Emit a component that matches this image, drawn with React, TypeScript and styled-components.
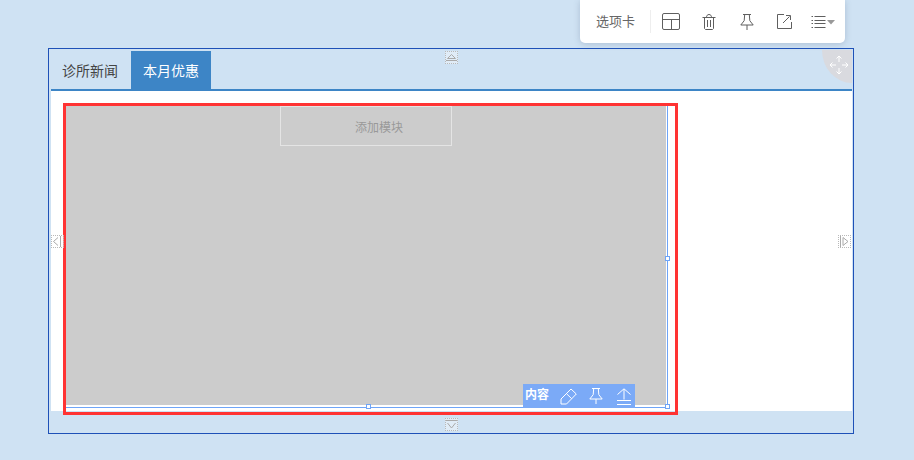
import React from 'react'
import styled, { createGlobalStyle } from 'styled-components'

const Global = createGlobalStyle`
	html, body {
		margin: 0;
		padding: 0;
		height: 460px;
		overflow: hidden;
		background: #cfe2f3;
		font-family: "Noto Sans CJK SC", "Noto Sans", sans-serif;
	}
`
const Page = styled.div`
	position: relative;
	width: 914px;
	height: 460px;
	padding: 48px 0 0 48px;
	box-sizing: border-box;
`
const TopBar = styled.div`
	position: absolute;
	top: 0;
	left: 580px;
	width: 265px;
	height: 43px;
	box-sizing: border-box;
	display: flex;
	align-items: center;
	padding: 0 10px 0 16px;
	background: #fff;
	border-radius: 0 0 5px 5px;
	box-shadow: 0 1px 6px rgba(90, 110, 140, 0.3);
	color: #5f5f5f;
`
const TopLabel = styled.span`
	font-size: 13px;
	line-height: 41px;
	height: 43px;
	width: 39px;
	white-space: nowrap;
	color: #666;
`
const TopDivider = styled.i`
	width: 1px;
	height: 23px;
	margin: 0 11px 0 15px;
	background: #eeeeee;
`
const TopIcon = styled.span<{ $w: number; $gap: number }>`
	display: flex;
	width: ${p => p.$w}px;
	margin-right: ${p => p.$gap}px;
`
const Frame = styled.div`
	position: relative;
	width: 806px;
	height: 386px;
	box-sizing: border-box;
	border: 1px solid #1f51b7;
	padding: 2px 1px 0 2px;
`
const TabBar = styled.div`
	display: flex;
	height: 40px;
	box-sizing: border-box;
	border-bottom: 2px solid #3d85c6;
`
const Tab = styled.div<{ $active?: boolean }>`
	width: 80px;
	height: 38px;
	box-sizing: border-box;
	padding-right: ${p => (p.$active ? 0 : 2)}px;
	line-height: 39px;
	text-align: center;
	font-size: 14px;
	color: ${p => (p.$active ? '#fff' : '#444')};
	background: ${p => (p.$active ? '#3d85c6' : 'transparent')};
`
const Body = styled.div`
	height: 320px;
	box-sizing: border-box;
	padding: 12px 0 0 12px;
	background: #fff;
`
const RedFrame = styled.div`
	width: 615px;
	height: 312px;
	box-sizing: border-box;
	border: 3px solid #ff3333;
`
const Selection = styled.div`
	position: relative;
	width: 602px;
	height: 302px;
	box-sizing: border-box;
	border-right: 1px solid #6ea4f7;
	border-bottom: 1px solid #6ea4f7;
`
const Gray = styled.div`
	width: 600px;
	height: 299px;
	background: #cccccc;
	display: flex;
	justify-content: center;
`
const AddBox = styled.div`
	width: 172px;
	height: 40px;
	box-sizing: border-box;
	border: 1px solid #e4e4e4;
	padding-left: 26px;
	text-align: center;
	font-size: 12px;
	line-height: 40px;
	color: #999;
`
const Handle = styled.i<{ $x: number; $y: number }>`
	position: absolute;
	left: ${p => p.$x}px;
	top: ${p => p.$y}px;
	width: 5px;
	height: 5px;
	box-sizing: border-box;
	background: #fff;
	border: 1px solid #6ea4f7;
`
const ContentBar = styled.div`
	position: absolute;
	right: 32px;
	bottom: -1px;
	width: 112px;
	height: 24px;
	display: flex;
	align-items: center;
	padding-left: 2px;
	box-sizing: border-box;
	background: #7baaf7;
	color: #fff;
`
const ContentLabel = styled.span`
	font-size: 12px;
	font-weight: 700;
	line-height: 20px;
	height: 24px;
	width: 24px;
	margin-right: 11px;
	white-space: nowrap;
`
const BarIcon = styled.span<{ $gap: number }>`
	display: flex;
	margin-right: ${p => p.$gap}px;
`
const Nudge = styled.div<{ $x: number; $y: number }>`
	position: absolute;
	left: ${p => p.$x}px;
	top: ${p => p.$y}px;
	width: 13px;
	height: 13px;
	box-sizing: border-box;
	border: 1px dotted #b9b9b9;
	display: flex;
	background: rgba(255, 255, 255, 0.35);
`
const MoveHandle = styled.div`
	position: absolute;
	top: 1px;
	right: 1px;
	width: 30px;
	height: 33px;
	display: flex;
	align-items: center;
	justify-content: center;
	padding: 0 0 4px 3px;
	box-sizing: border-box;
	background: #d9dadf;
	border-bottom-left-radius: 30px 33px;
`

const stroke = { fill: 'none', stroke: 'currentColor', strokeWidth: 1 }

const LayoutIcon = () => (
	<svg width="18" height="17" viewBox="0 0 18 17" {...stroke}>
		<rect x="0.5" y="0.5" width="17" height="16" rx="1.5" />
		<path d="M1 6.500h16M9.500 6.500v10" />
	</svg>
)
const TrashIcon = () => (
	<svg width="14" height="16" viewBox="0 0 14 16" {...stroke}>
		<path d="M0.500 3.500h13M4.500 3.500C4.500 1.500 5.500 0.500 7 0.500s2.500 1 2.500 3M2.500 3.500v11l1 1h7l1-1v-11M5.500 6v7M8.500 6v7" />
	</svg>
)
const PinIcon = () => (
	<svg width="14" height="16" viewBox="0 0 14 16" {...stroke}>
		<path d="M3 0.500h8M4.700 0.500l-0.500 6.200L0.800 11h12.400l-3.400-4.300-0.500-6.200M7 11v5" />
	</svg>
)
const ExternalIcon = () => (
	<svg width="15" height="15" viewBox="0 0 15 15" {...stroke}>
		<path d="M7 0.500H0.500v14h14V8M6 9l6.500-6.500M9 1.500h4.500v4.500" />
	</svg>
)
const ListIcon = () => (
	<svg width="24" height="14" viewBox="0 0 24 14">
		<path d="M3.500 1.500h11M3.500 5.500h11M3.500 8.500h11M3.500 12.500h11" {...stroke} />
		<path d="M0.500 1.500h1.500M0.500 5.500h1.500M0.500 8.500h1.500M0.500 12.500h1.500" {...stroke} />
		<path d="M16 5h8l-4 4.500z" fill="#999" />
	</svg>
)
const EraserIcon = () => (
	<svg width="17" height="17" viewBox="0 0 17 17" {...stroke}>
		<path d="M11 1l5.300 5-9.800 10H1V11zM6.500 5.700l5.200 5" />
	</svg>
)
const UploadIcon = () => (
	<svg width="14" height="17" viewBox="0 0 14 17" {...stroke}>
		<path d="M0.500 6.500L7 0.800l6.500 5.700M7 1v10.500M0 12.500h14M0 16.500h14" />
	</svg>
)
const MoveIcon = () => (
	<svg width="20" height="20" viewBox="0 0 20 20" fill="none" stroke="#fff" strokeWidth={1}>
		<path d="M10 1v6M7.500 3.500L10 1l2.500 2.500M10 13v6M7.500 16.500L10 19l2.500-2.500M1 10h6M3.500 7.500L1 10l2.500 2.500M13 10h6M16.500 7.500L19 10l-2.500 2.500" />
	</svg>
)
const NudgeGlyph: React.FC<{ d: string }> = ({ d }) => (
	<svg width="11" height="11" viewBox="0 0 11 11" fill="none" stroke="#aaa" strokeWidth={1}>
		<path d={d} />
	</svg>
)

const App: React.FC = () => (
	<Page>
		<Global />
		<TopBar>
			<TopLabel>选项卡</TopLabel>
			<TopDivider />
			<TopIcon $w={18} $gap={22}><LayoutIcon /></TopIcon>
			<TopIcon $w={14} $gap={24}><TrashIcon /></TopIcon>
			<TopIcon $w={14} $gap={23}><PinIcon /></TopIcon>
			<TopIcon $w={15} $gap={19}><ExternalIcon /></TopIcon>
			<TopIcon $w={24} $gap={0}><ListIcon /></TopIcon>
		</TopBar>
		<Frame>
			<TabBar>
				<Tab>诊所新闻</Tab>
				<Tab $active>本月优惠</Tab>
			</TabBar>
			<Body>
				<RedFrame>
					<Selection>
						<Gray>
							<AddBox>添加模块</AddBox>
						</Gray>
						<Handle $x={300} $y={298} />
						<Handle $x={599} $y={150} />
						<Handle $x={599} $y={298} />
						<ContentBar>
							<ContentLabel>内容</ContentLabel>
							<BarIcon $gap={12}><EraserIcon /></BarIcon>
							<BarIcon $gap={14}><PinIcon /></BarIcon>
							<BarIcon $gap={0}><UploadIcon /></BarIcon>
						</ContentBar>
					</Selection>
				</RedFrame>
			</Body>
			<Nudge $x={396} $y={2}><NudgeGlyph d="M0 8.500h11M1.500 6.500L5.500 2.500 9.500 6.500z" /></Nudge>
			<Nudge $x={396} $y={369}><NudgeGlyph d="M0 1.500h11M1.500 4L5.500 9 9.500 4" /></Nudge>
			<Nudge $x={2} $y={186}><NudgeGlyph d="M8.500 0v11M6 1.500L1.500 5.500 6 9.500" /></Nudge>
			<Nudge $x={789} $y={186}><NudgeGlyph d="M1.500 0v11M4 1.500l5 4-5 4z" /></Nudge>
			<MoveHandle><MoveIcon /></MoveHandle>
		</Frame>
	</Page>
)

export default App
